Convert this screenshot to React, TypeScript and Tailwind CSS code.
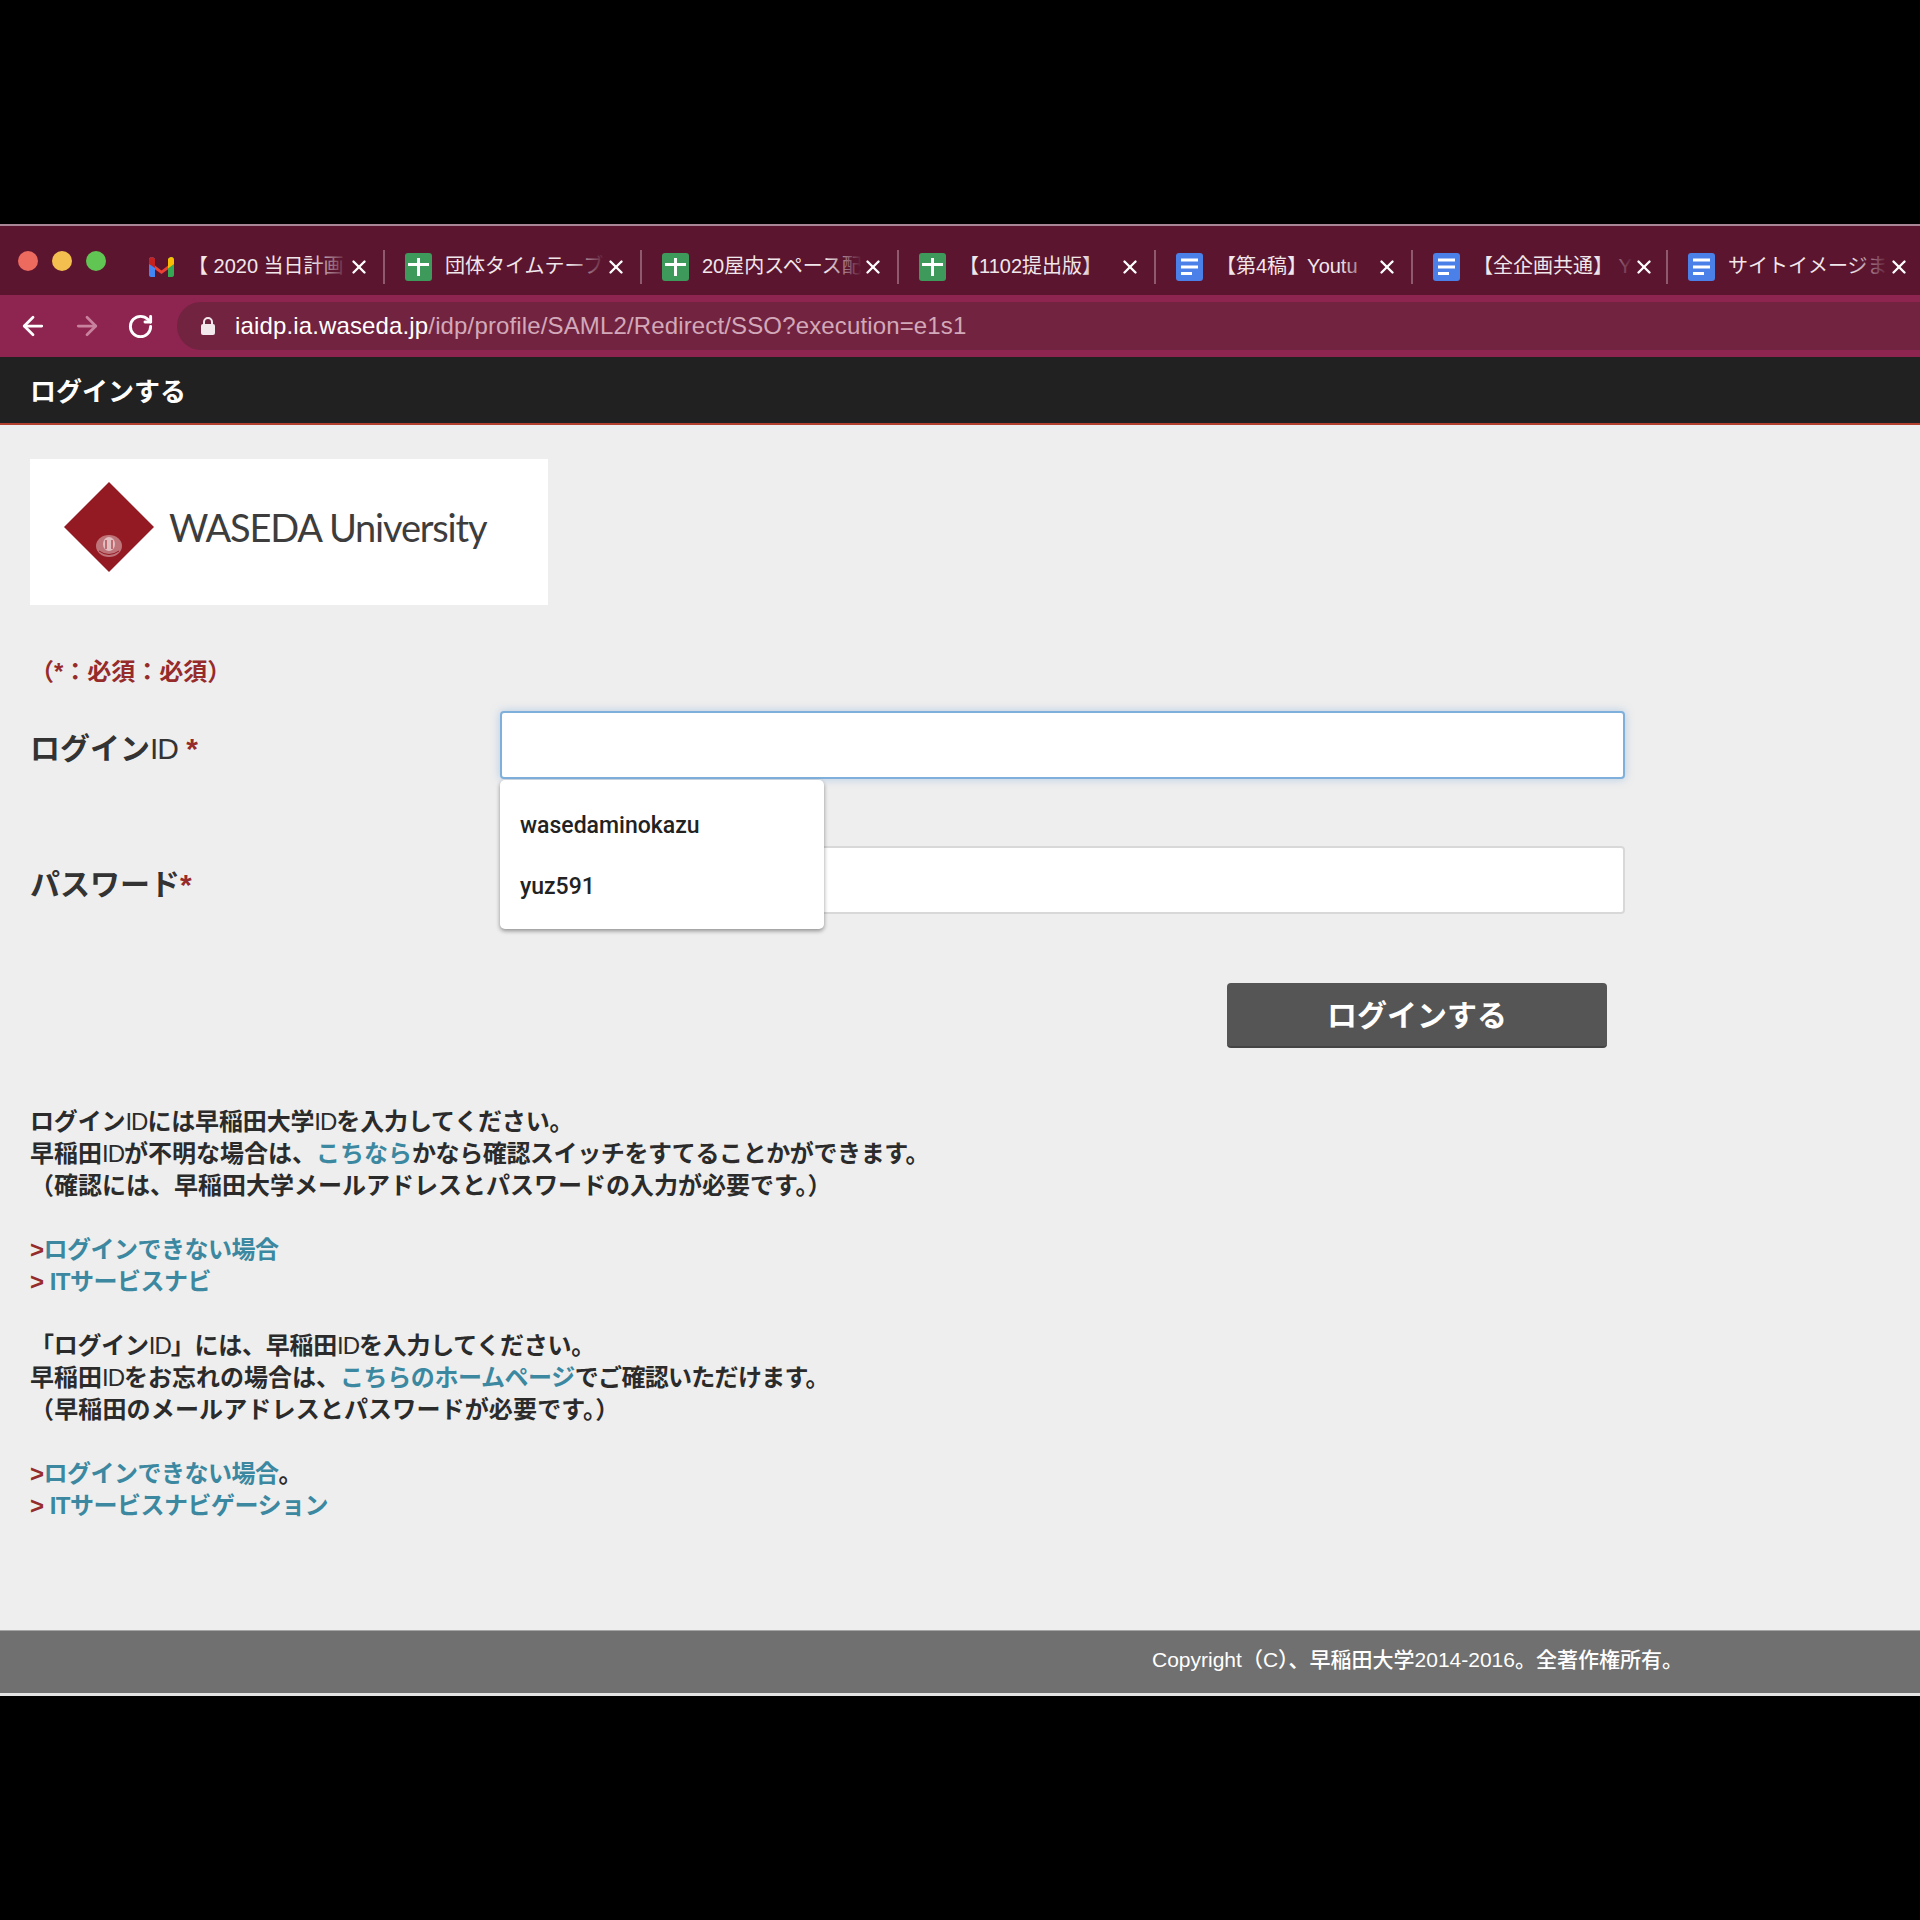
import { ArrowLeft, ArrowRight, RotateCw, X } from "lucide-react";

// tab favicons
const GmailIcon = () => (
  <svg width="27" height="22" viewBox="0 0 27 22">
    <path d="M1 5 L13.5 14.5 L26 5 L26 9 L13.5 18 L1 9 Z" fill="#ea4335" />
    <path d="M1 4 C1 1 4 0 6 2 L7 3 L7 21 L3 21 C2 21 1 20 1 19 Z" fill="#4285f4" />
    <path d="M20 3 L21 2 C23 0 26 1 26 4 L26 19 C26 20 25 21 24 21 L20 21 Z" fill="#34a853" />
    <path d="M20 3 L21 2 C23 0 26 1 26 4 L26 8 L20 12.5 Z" fill="#fbbc04" />
    <path d="M1 4 C1 1 4 0 6 2 L7 3 L7 12 L1 8 Z" fill="#c5221f" />
  </svg>
);

const SheetIcon = () => (
  <svg width="27" height="28" viewBox="0 0 27 28">
    <rect x="0" y="0" width="27" height="28" rx="3" fill="#3d9a5b" />
    <rect x="3" y="10" width="21" height="3" fill="#fff" />
    <rect x="12" y="5" width="3" height="18" fill="#fff" />
  </svg>
);

const DocIcon = () => (
  <svg width="27" height="28" viewBox="0 0 27 28">
    <rect x="0" y="0" width="27" height="28" rx="3" fill="#4a80e8" />
    <rect x="5" y="5.5" width="17" height="3" fill="#fff" />
    <rect x="5" y="12.5" width="17" height="3" fill="#fff" />
    <rect x="5" y="19" width="11" height="3" fill="#fff" />
  </svg>
);

const tabs = [
  { icon: <GmailIcon />, title: "【 2020 当日計画", width: "w-[257px]", sep: true },
  { icon: <SheetIcon />, title: "団体タイムテーブ", width: "w-[257px]", sep: true },
  { icon: <SheetIcon />, title: "20屋内スペース配", width: "w-[257px]", sep: true },
  { icon: <SheetIcon />, title: "【1102提出版】", width: "w-[257px]", sep: true },
  { icon: <DocIcon />, title: "【第4稿】Youtu", width: "w-[257px]", sep: true },
  { icon: <DocIcon />, title: "【全企画共通】 Y", width: "w-[255px]", sep: true },
  { icon: <DocIcon />, title: "サイトイメージま", width: "w-[252px]", sep: false },
];

const Tab = ({ icon, title, width, sep }: (typeof tabs)[number]) => (
  <div className={`${width} flex items-center shrink-0 pt-[12px]`}>
    <div className="w-[27px] ml-[20px] flex justify-center shrink-0">{icon}</div>
    <div className="relative ml-[13px] w-[160px] whitespace-nowrap text-[20px] leading-[28px] text-[#f1e7ea] shrink-0 -mt-[2px]">
      {title}
      <div className="absolute right-0 top-0 bottom-0 w-[36px] bg-gradient-to-r from-transparent to-[#5b152f]" />
    </div>
    <X size={22} strokeWidth={2.6} className="text-white shrink-0" />
    {sep && <div className="ml-auto w-[2px] h-[34px] bg-[#8f5a6d] shrink-0" />}
  </div>
);

const Diamond = () => (
  <svg width="90" height="90" viewBox="0 0 90 90">
    <polygon points="45,0 90,45 45,90 0,45" fill="#931a22" />
    <g fill="#e3bfc2">
      <ellipse cx="45" cy="64" rx="13" ry="11" opacity="0.55" />
      <ellipse cx="45" cy="62" rx="6" ry="7" />
    </g>
    <g fill="none" stroke="#931a22" strokeWidth="1">
      <path d="M42 58 L42 67 M48 58 L48 67" />
      <path d="M35 69 Q45 76 55 69" />
    </g>
  </svg>
);

const Id = () => <span className="font-normal tracking-[-1px]">ID</span>;

export default function App() {
  return (
    <div className="min-h-[1920px] bg-black pt-[224px] font-['Liberation_Sans','Noto_Sans_CJK_JP',sans-serif]">
      {/* browser chrome */}
      <div className="h-[71px] bg-[#5b152f] border-t-2 border-[#a98695] flex items-center">
        <div className="w-[128px] flex items-center gap-[14px] pl-[18px] shrink-0">
          <span className="w-[20px] h-[20px] rounded-full bg-[#ec6a5e]" />
          <span className="w-[20px] h-[20px] rounded-full bg-[#f4bf4f]" />
          <span className="w-[20px] h-[20px] rounded-full bg-[#61c554]" />
        </div>
        {tabs.map((t) => (
          <Tab key={t.title} {...t} />
        ))}
      </div>
      <div className="h-[62px] bg-[#8e2450] flex items-center">
        <ArrowLeft size={30} strokeWidth={2.2} className="ml-[18px] text-white" />
        <ArrowRight size={30} strokeWidth={2.2} className="ml-[24px] text-[#c9829e]" />
        <RotateCw size={27} strokeWidth={2.6} className="ml-[25px] text-white" />
        <div className="ml-[23px] flex-1 h-[48px] rounded-l-full bg-[#722340] flex items-center">
          <svg width="16" height="20" viewBox="0 0 16 20" className="ml-[23px]">
            <path d="M4 9 V6 a4 4 0 0 1 8 0 V9" fill="none" stroke="#f3e8ec" strokeWidth="2" />
            <rect x="1" y="8" width="14" height="11" rx="2" fill="#f3e8ec" />
          </svg>
          <div className="ml-[19px] text-[24px] tracking-[0.14px] whitespace-nowrap text-[#d3a9b9]">
            <span className="text-white">iaidp.ia.waseda.jp</span>/idp/profile/SAML2/Redirect/SSO?execution=e1s1
          </div>
        </div>
      </div>

      {/* page header */}
      <div className="h-[68px] bg-[#212121] border-b-2 border-[#b4402f] flex items-center pl-[30px] pt-[4px]">
        <span className="text-[26px] font-bold text-white">ログインする</span>
      </div>

      {/* page body */}
      <div className="bg-[#eeeeee] pt-[34px] pb-[108px] px-[30px]">
        <div className="w-[518px] h-[146px] bg-white flex items-center pl-[34px] pb-[10px]">
          <Diamond />
          <span className="ml-[15px] font-['Lato',sans-serif] font-normal text-[38px] tracking-[-1.2px] text-[#3d3d3d] whitespace-nowrap">
            WASEDA University
          </span>
        </div>

        <div className="mt-[52px] h-[30px] leading-[30px] text-[24px] font-bold text-[#962b2b]">（*：必須：必須）</div>

        <div className="mt-[24px] relative">
          <div className="flex items-center">
            <label className="w-[470px] pt-[6px] text-[30px] font-bold text-[#333]">
              ログイン<Id /> <span className="text-[#962b2b]">*</span>
            </label>
            <input
              type="text"
              className="w-[1125px] h-[68px] bg-white rounded-[4px] border-2 border-[#7fb0dc] shadow-[0_0_8px_rgba(120,170,220,0.5)] outline-none"
            />
          </div>
          <div className="mt-[67px] flex items-center">
            <label className="w-[470px] pt-[8px] text-[30px] font-bold text-[#333]">
              パスワード<span className="text-[#962b2b]">*</span>
            </label>
            <input
              type="password"
              className="w-[1125px] h-[68px] bg-white rounded-[4px] border-2 border-[#d8d8d8] outline-none"
            />
          </div>
          {/* autofill popup */}
          <div className="absolute left-[470px] top-[69px] w-[324px] h-[149px] bg-white rounded-[5px] shadow-[0_2px_4px_rgba(0,0,0,0.4)] pt-[16px] font-['Roboto',sans-serif] text-[23px] font-medium text-[#222]">
            <div className="h-[61px] flex items-center pl-[20px]">wasedaminokazu</div>
            <div className="h-[61px] flex items-center pl-[20px]">yuz591</div>
          </div>
        </div>

        <div className="mt-[69px] pl-[1197px]">
          <button className="w-[380px] h-[65px] pt-[2px] rounded-[4px] bg-[#555555] text-[30px] font-bold text-white border-b-2 border-[#444]">
            ログインする
          </button>
        </div>

        <div className="mt-[58px] text-[24px] leading-[32px] font-bold text-[#2b2b2b]">
          <p className="tracking-[-0.15px]">ログイン<Id />には早稲田大学<Id />を入力してください。</p>
          <p>
            早稲田<Id />が不明な場合は、<a className="text-[#3b88a0]">こちなら</a>
            <span className="tracking-[-0.4px]">かなら確認スイッチをすてることかができます。</span>
          </p>
          <p>（確認には、早稲田大学メールアドレスとパスワードの入力が必要です。）</p>
          <p className="h-[32px]" />
          <p className="text-[#3b88a0] tracking-[-0.5px]">
            <span className="text-[#962b2b]">&gt;</span>ログインできない場合
          </p>
          <p className="text-[#3b88a0] tracking-[-0.5px]">
            <span className="text-[#962b2b]">&gt;</span> ITサービスナビ
          </p>
          <p className="h-[32px]" />
          <p className="tracking-[-0.25px]">「ログイン<Id />」には、早稲田<Id />を入力してください。</p>
          <p>
            早稲田<Id />をお忘れの場合は、<a className="text-[#3b88a0] tracking-[-0.4px]">こちらのホームページ</a>
            <span className="tracking-[-0.7px]">でご確認いただけます。</span>
          </p>
          <p className="tracking-[0.15px]">（早稲田のメールアドレスとパスワードが必要です。）</p>
          <p className="h-[32px]" />
          <p className="tracking-[-0.5px]">
            <span className="text-[#962b2b]">&gt;</span>
            <a className="text-[#3b88a0]">ログインできない場合</a>。
          </p>
          <p className="text-[#3b88a0] tracking-[-0.5px]">
            <span className="text-[#962b2b]">&gt;</span> ITサービスナビゲーション
          </p>
        </div>
      </div>

      {/* footer */}
      <div className="h-[66px] bg-[#707070] border-t border-[#a5a5a5] border-b-[3px] border-b-[#e4e4e4] flex items-center pl-[1152px] pb-[4px]">
        <span className="text-[21px] font-medium text-white whitespace-nowrap">Copyright（C）、早稲田大学2014-2016。全著作権所有。</span>
      </div>
    </div>
  );
}
